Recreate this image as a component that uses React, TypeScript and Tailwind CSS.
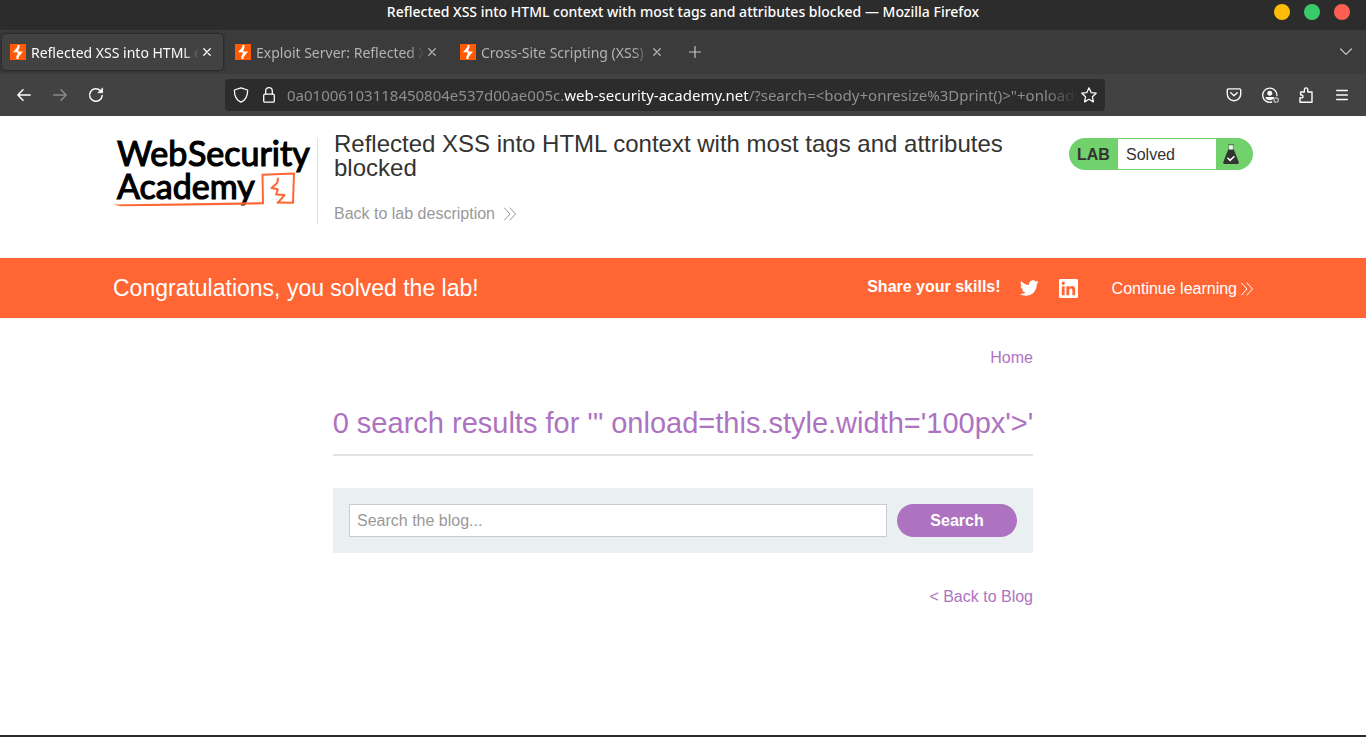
import type { ReactNode } from 'react';

const iconProps = {
  fill: 'none',
  stroke: 'currentColor',
  strokeLinecap: 'round',
  strokeLinejoin: 'round',
} as const;

function BurpIcon() {
  return (
    <svg width="16" height="16" viewBox="0 0 16 16" className="shrink-0" aria-hidden="true">
      <rect width="16" height="16" fill="#ff5b04" />
      <path d="M9.4 1H7.400v2L3 8.200h4.600v2.400L6.400 12v3h2.200v-2.100L13 7.600H8.500V5.400l.9-1.400z" fill="#fff" />
    </svg>
  );
}

function CloseIcon() {
  return (
    <svg width="8" height="8" viewBox="0 0 8 8" {...iconProps} strokeWidth="1.3" aria-hidden="true">
      <path d="M.8.8l6.4 6.4M7.2.8L.8 7.2" />
    </svg>
  );
}

function Chevrons({ className }: { className: string }) {
  return (
    <svg width="12" height="14" viewBox="0 0 12 14" {...iconProps} strokeWidth="1" className={className} aria-hidden="true">
      <path d="M.5 1L6 7 .5 13M6 1l5.500 6L6 13" />
    </svg>
  );
}

function Tab({ title, active = false }: { title: string; active?: boolean }) {
  return (
    <div
      className={
        active
          ? 'flex h-9 w-[221px] items-center rounded bg-[#424242] pr-2 pl-2 text-[#fbfbfe] shadow-[0_0_3px_rgba(0,0,0,0.7)]'
          : 'flex h-9 w-[221px] items-center rounded pr-2 pl-2 text-[#b4b4b4]'
      }
    >
      <BurpIcon />
      <button
        type="button"
        className="ml-[5px] min-w-0 flex-1 overflow-hidden text-left text-[14px] whitespace-nowrap [mask-image:linear-gradient(to_left,transparent,black_16px)]"
      >
        {title}
      </button>
      <button type="button" aria-label="Close tab" className="flex size-4 items-center justify-center">
        <CloseIcon />
      </button>
    </div>
  );
}

function ToolButton({ label, children, className = '' }: { label: string; children: ReactNode; className?: string }) {
  return (
    <button type="button" aria-label={label} className={`flex size-9 items-center justify-center ${className}`}>
      {children}
    </button>
  );
}

function BrowserChrome() {
  return (
    <div className="font-['Noto_Sans',sans-serif]">
      <div className="grid h-[30px] grid-cols-[1fr_auto_1fr] items-center bg-[#2c2c2c] px-4">
        <span />
        <span className="pb-[6px] text-[14px] leading-5 font-medium text-white">
          Reflected XSS into HTML context with most tags and attributes blocked — Mozilla Firefox
        </span>
        <div className="flex justify-end gap-[14px] pb-[6px]">
          <button type="button" aria-label="Minimize" className="size-4 rounded-full bg-[#ffbd07]" />
          <button type="button" aria-label="Maximize" className="size-4 rounded-full bg-[#39ca6a]" />
          <button type="button" aria-label="Close" className="size-4 rounded-full bg-[#ff5f50]" />
        </div>
      </div>

      <div className="flex h-11 items-center gap-1 bg-[#3b3b3b] pr-1 pl-[2px]">
        <Tab title="Reflected XSS into HTML context" active />
        <Tab title="Exploit Server: Reflected XSS" />
        <Tab title="Cross-Site Scripting (XSS) Cheat" />
        <ToolButton label="New tab" className="text-[#c4c4c4]">
          <svg width="12" height="12" viewBox="0 0 12 12" {...iconProps} strokeWidth="1.2">
            <path d="M6 .5v11M.5 6h11" />
          </svg>
        </ToolButton>
        <ToolButton label="List all tabs" className="ml-auto text-[#c4c4c4]">
          <svg width="12" height="8" viewBox="0 0 12 8" {...iconProps} strokeWidth="1.2" className="ml-1">
            <path d="M.6 1L6 6.4 11.4 1" />
          </svg>
        </ToolButton>
      </div>

      <div className="flex h-[42px] items-center bg-[#424242] pr-[6px] pl-[6px] text-[#fbfbfe]">
        <ToolButton label="Back">
          <svg width="14" height="12" viewBox="0 0 14 12" {...iconProps} strokeWidth="1.5">
            <path d="M13.2 6H1M6 .8L.9 6 6 11.2" />
          </svg>
        </ToolButton>
        <ToolButton label="Forward" className="text-[#8a8a8a]">
          <svg width="14" height="12" viewBox="0 0 14 12" {...iconProps} strokeWidth="1.5">
            <path d="M.8 6H13M8 .8L13.1 6 8 11.2" />
          </svg>
        </ToolButton>
        <ToolButton label="Reload">
          <svg width="16" height="16" viewBox="0 0 16 16" {...iconProps} strokeWidth="1.5">
            <path d="M14.200 8.500A6.300 6.300 0 1 1 12.300 3.500" />
            <path d="M14.6 1.3v4.4h-4.4z" fill="currentColor" strokeWidth="0.8" />
          </svg>
        </ToolButton>
        <div className="ml-[111px] flex h-8 w-[880px] min-w-0 items-center rounded bg-[#2c2c2c] px-2">
          <svg width="16" height="16" viewBox="0 0 16 16" {...iconProps} strokeWidth="1.3" className="shrink-0">
            <path d="M8 .8L14.6 3c.2 5.500-1.800 10-6.600 12.200C3.200 13 1.200 8.500 1.400 3z" />
          </svg>
          <svg width="12" height="16" viewBox="0 0 12 16" {...iconProps} strokeWidth="1.3" className="ml-[14px] shrink-0">
            <rect x=".7" y="7.200" width="10.600" height="8" rx="1.300" />
            <path d="M2.700 7V4a3.300 3.300 0 0 1 6.600 0v3" />
          </svg>
          <div className="ml-3 min-w-0 flex-1 overflow-hidden text-[15px] whitespace-nowrap text-[#8f8f8f] [mask-image:linear-gradient(to_left,transparent,black_32px)]">
            0a01006103118450804e537d00ae005c.<span className="text-[#fbfbfe]">web-security-academy.net</span>
            /?search=&lt;body+onresize%3Dprint()&gt;"+onload%3Dthis.style.width
          </div>
          <button type="button" aria-label="Bookmark this page" className="ml-1 shrink-0">
            <svg width="16" height="16" viewBox="0 0 16 16" {...iconProps} strokeWidth="1.3">
              <path d="M8 .8l2.100 4.800 5.100.6-3.800 3.500 1 5.200L8 12.300l-4.400 2.600 1-5.200L.8 6.200l5.100-.6z" />
            </svg>
          </button>
        </div>
        <div className="ml-auto flex">
          <ToolButton label="Save to Pocket">
            <svg width="16" height="14" viewBox="0 0 16 14" {...iconProps} strokeWidth="1.400">
              <path d="M2.500.9h11q1.200 0 1.200 1.200v4A6.500 6.500 0 0 1 8 12.700 6.500 6.500 0 0 1 1.300 6.100v-4Q1.300.9 2.500.9z" />
              <path d="M4.800 4.800L8 7.800l3.200-3" />
            </svg>
          </ToolButton>
          <ToolButton label="Account">
            <svg width="18" height="17" viewBox="0 0 18 17" {...iconProps} strokeWidth="1.300">
              <path d="M15.900 8.600A7.100 7.100 0 1 0 10.700 15" />
              <circle cx="8.800" cy="6.300" r="2.500" fill="currentColor" stroke="none" />
              <path d="M4.600 10H13v1.200a5.500 5.500 0 0 1-8.400 0z" fill="currentColor" stroke="none" />
              <circle cx="15.200" cy="13" r="2.200" stroke="#bdbdbd" />
            </svg>
          </ToolButton>
          <ToolButton label="Extensions">
            <svg width="14" height="16" viewBox="0 0 14 16" {...iconProps} strokeWidth="1.400">
              <path d="M1 10.800v4.400h12V5H8.800V2.600a1.700 1.700 0 0 0-3.400 0V5H1.600v3h1.300a1.500 1.500 0 0 1 0 2.900z" />
            </svg>
          </ToolButton>
          <ToolButton label="Open menu">
            <svg width="12" height="12" viewBox="0 0 12 12" {...iconProps} strokeWidth="1.300">
              <path d="M.6 1.500h10.800M.6 6h10.800M.6 10.500h10.800" />
            </svg>
          </ToolButton>
        </div>
      </div>
    </div>
  );
}

function AcademyLogo() {
  return (
    <svg width="202" height="74" viewBox="0 0 202 74" role="img" aria-label="Web Security Academy" className="block">
      <g fill="#000" stroke="#000" strokeWidth="1.2" className="font-['Lato',sans-serif] text-[34px]">
        <text x="4" y="28">Web</text>
        <text x="75" y="28">Security</text>
        <text x="4" y="61">Academy</text>
      </g>
      <g fill="none" stroke="#ff6633" strokeLinecap="round" strokeLinejoin="round">
        <path d="M150 65.500L149.500 36.800 181 35.500 180 64.800 164.500 64.600" strokeWidth="2" />
        <path d="M165 40.500l-.8 4.500-5.700 5 6.300 1.200-1.600 5.300 8.300.6-6.500 7.500" strokeWidth="2" />
      </g>
      <path d="M0 66.500L149 64.200v2.100L60 67.800 8 68.200z" fill="#ff6633" />
    </svg>
  );
}

function LabStatus() {
  return (
    <div className="flex h-8 w-[184px] shrink-0 items-stretch overflow-hidden rounded-full bg-[#70d16d] py-px text-[#333332]">
      <span className="flex w-[49px] items-center pt-[2px] pl-2 text-base font-bold">LAB</span>
      <span className="flex flex-1 items-center bg-white pt-[2px] pl-2 text-base">Solved</span>
      <span className="flex w-[37px] items-center pl-[7px]">
        <svg width="16" height="20" viewBox="0 0 16 20" aria-hidden="true">
          <path d="M5.200 5.200h5.600l5 13.300q.2 1.300-1.100 1.500H1.300Q0 19.800.2 18.500z" fill="#333332" />
          <path d="M6 1h4v4.600H6z" fill="#e9f6e8" />
          <path d="M5 .6h6" stroke="#5b7a5a" strokeWidth="1.200" />
          <path d="M5.700 1.200v4M10.300 1.200v4" stroke="#5b8a5a" strokeWidth=".6" />
          <path d="M4.400 13.800l2.700 2.600 4.300-4.200" fill="none" stroke="#fff" strokeWidth="1.500" />
        </svg>
      </span>
    </div>
  );
}

export default function App() {
  return (
    <div className="flex min-h-screen flex-col border-b-2 border-[#2b2b2b] bg-white font-['Liberation_Sans',Arial,sans-serif] text-base text-[#333332]">
      <BrowserChrome />

      <header className="px-6 pt-4 pb-8">
        <div className="mx-auto flex max-w-[1140px] items-start">
          <a href="#academy" className="mt-[6px] h-[86px] w-[205px] shrink-0 border-r border-[#e2e2e2]">
            <AcademyLogo />
          </a>
          <div className="min-w-0 flex-1 pl-4">
            <h2 className="max-w-[700px] text-2xl leading-6">
              Reflected XSS into HTML context with most tags and attributes blocked
            </h2>
            <a href="#description" className="mt-[22px] flex items-center text-[#999999]">
              Back to lab description
              <Chevrons className="ml-[9px]" />
            </a>
          </div>
          <div className="mt-[6px]">
            <LabStatus />
          </div>
        </div>
      </header>

      <section className="bg-[#ff6633] px-6 text-white">
        <div className="mx-auto flex h-[60px] max-w-[1140px] items-center">
          <h4 className="text-[23px]">Congratulations, you solved the lab!</h4>
          <span className="ml-auto pb-[2px] font-bold">Share your skills!</span>
          <a href="#twitter" aria-label="Twitter" className="ml-[18px]">
            <svg width="20" height="20" viewBox="0 0 24 24" fill="currentColor" className="block">
              <path d="M23.643 4.937c-.835.37-1.732.62-2.675.733.962-.576 1.700-1.490 2.048-2.578-.9.534-1.897.922-2.958 1.130-.85-.904-2.060-1.470-3.400-1.470-2.572 0-4.658 2.086-4.658 4.660 0 .364.042.718.120 1.060-3.873-.195-7.304-2.050-9.602-4.868-.4.690-.63 1.490-.63 2.342 0 1.616.823 3.043 2.072 3.878-.764-.025-1.482-.234-2.110-.583v.06c0 2.257 1.605 4.140 3.737 4.568-.392.106-.803.162-1.227.162-.3 0-.593-.028-.877-.082.593 1.850 2.313 3.198 4.352 3.234-1.595 1.250-3.604 1.995-5.786 1.995-.376 0-.747-.022-1.112-.065 2.062 1.323 4.510 2.093 7.140 2.093 8.570 0 13.255-7.098 13.255-13.254 0-.2-.005-.402-.014-.602.910-.658 1.700-1.477 2.323-2.410z" />
            </svg>
          </a>
          <a href="#linkedin" aria-label="LinkedIn" className="ml-5">
            <svg width="19" height="19" viewBox="0 0 24 24" fill="currentColor" className="block">
              <path d="M20.447 20.452h-3.554v-5.569c0-1.328-.027-3.037-1.852-3.037-1.853 0-2.136 1.445-2.136 2.939v5.667H9.351V9h3.414v1.561h.046c.477-.9 1.637-1.850 3.370-1.850 3.601 0 4.267 2.370 4.267 5.455v6.286zM5.337 7.433a2.062 2.062 0 0 1-2.063-2.065 2.064 2.064 0 1 1 2.063 2.065zm1.782 13.019H3.555V9h3.564v11.452zM22.225 0H1.771C.792 0 0 .774 0 1.729v20.542C0 23.227.792 24 1.771 24h20.451C23.200 24 24 23.227 24 22.271V1.729C24 .774 23.200 0 22.222 0h.003z" />
            </svg>
          </a>
          <a href="#learning" className="ml-[34px] flex items-center pt-px">
            Continue learning
            <Chevrons className="ml-1" />
          </a>
        </div>
      </section>

      <main className="mx-auto w-full max-w-[700px] pt-7 pb-8">
        <nav className="text-right">
          <a href="#home" className="text-[#ad73c1]">Home</a>
        </nav>
        <h1 className="mt-8 flex justify-center border-b-2 border-[#e4e4e4] pb-[10px] text-[29px] leading-[42px] whitespace-nowrap text-[#ad73c1]">
          0 search results for '" onload=this.style.width='100px'&gt;'
        </h1>
        <form className="mt-8 flex gap-[10px] bg-[#eaeff2] p-4" onSubmit={(e) => e.preventDefault()}>
          <input
            type="text"
            name="search"
            aria-label="Search the blog"
            placeholder="Search the blog..."
            className="h-[33px] min-w-0 flex-1 border border-[#c8cccf] bg-white px-[7px] outline-none placeholder:text-[#999999]"
          />
          <button type="submit" className="h-[33px] w-[120px] rounded-full bg-[#ad73c1] font-bold text-white">
            Search
          </button>
        </form>
        <div className="mt-8 text-right">
          <a href="#blog" className="text-[#ad73c1]">&lt; Back to Blog</a>
        </div>
      </main>
    </div>
  );
}
